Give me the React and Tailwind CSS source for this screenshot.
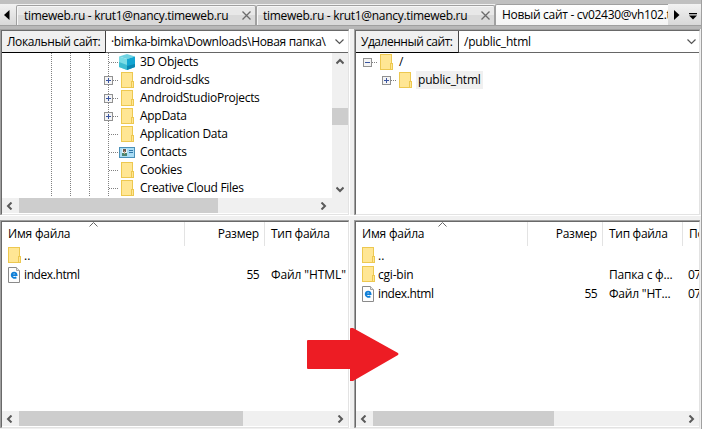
import React from "react";

function Folder() {
  return (
    <svg width="14" height="17" viewBox="0 0 14 17" className="shrink-0" shapeRendering="crispEdges">
      <rect x="0" y="0" width="12" height="16" fill="#edc850" />
      <rect x="1" y="1" width="10" height="14" fill="#ffe694" />
      <rect x="10" y="9" width="3" height="7" fill="#edc850" />
      <rect x="11" y="10" width="1" height="5" fill="#ffe694" />
    </svg>
  );
}

function HtmlFile() {
  return (
    <svg width="12" height="16" viewBox="0 0 12 16" className="shrink-0">
      <path d="M.5.5h8l3 3v12H.5z" fill="#fdfdfd" stroke="#8a8a8a" />
      <path d="M8.5.5v3h3" fill="#e8e8e8" stroke="#a5a5a5" />
      <path d="M3.600 8.200H8.600C8.600 4.700 3.700 4.800 3.700 8.300 3.700 11 6.500 11.300 8.400 10.400" fill="none" stroke="#0f7fd8" strokeWidth="1.800" />
    </svg>
  );
}

function Cube() {
  return (
    <svg width="16" height="16" viewBox="0 0 16 16" className="shrink-0">
      <path d="M8 0l8 2.500L8 5 0 2.500z" fill="#6fd3e2" />
      <path d="M0 2.500L8 5v11l-8-3z" fill="#7bdce6" />
      <path d="M16 2.500L8 5v11l8-3z" fill="#12a5d2" />
      <path d="M0 8L8 11v5l-8-3z" fill="#3dbcd2" />
      <path d="M8 12l8-2v3l-8 3z" fill="#0b87b2" />
    </svg>
  );
}

function Contact() {
  return (
    <svg width="16" height="11" viewBox="0 0 16 11" className="shrink-0" shapeRendering="crispEdges">
      <rect width="16" height="11" fill="#4a90b8" />
      <rect x="1" y="1" width="14" height="9" fill="#a9dcf5" />
      <rect x="3" y="2" width="5" height="7" fill="#e4f1f6" />
      <rect x="4" y="2" width="3" height="3" fill="#6b5a4c" />
      <rect x="3" y="6" width="5" height="3" fill="#4b8570" />
      <rect x="5" y="4" width="1" height="3" fill="#c9a58a" />
      <rect x="10" y="3" width="4" height="1" fill="#2f76a8" />
      <rect x="10" y="5" width="4" height="1" fill="#2f76a8" />
    </svg>
  );
}

function Expander({ open }) {
  return (
    <svg width="9" height="9" viewBox="0 0 9 9" className="shrink-0" shapeRendering="crispEdges">
      <rect width="9" height="9" fill="#919191" />
      <rect x="1" y="1" width="7" height="7" fill="#f4f4f4" />
      <rect x="2" y="4" width="5" height="1" fill="#3a55a0" />
      {!open && <rect x="4" y="2" width="1" height="5" fill="#3a55a0" />}
    </svg>
  );
}

function Chevron({ dir }) {
  const paths = {
    left: "M5.500 .5L2 4l3.500 3.500",
    right: "M2.500 .5L6 4 2.500 7.500",
    up: "M.5 5.500L4 2l3.500 3.500",
    down: "M.5 2.500L4 6l3.500-3.500",
  };
  return (
    <svg width="8" height="8" viewBox="0 0 8 8" className="shrink-0">
      <path d={paths[dir]} fill="none" stroke="#5a5a5a" strokeWidth="2" />
    </svg>
  );
}

function ComboArrow() {
  return (
    <svg width="9" height="6" viewBox="0 0 9 6" className="shrink-0">
      <path d="M.5 .5l4 4 4-4" fill="none" stroke="#555" strokeWidth="1.200" />
    </svg>
  );
}

function Close() {
  return (
    <svg width="9" height="9" viewBox="0 0 9 9" className="shrink-0">
      <path d="M.5.5l8 8M8.500.5l-8 8" stroke="#6b6b6b" strokeWidth="1.300" />
    </svg>
  );
}

function Dots({ vertical, length }) {
  return vertical ? (
    <svg width="1" height={length} className="shrink-0" shapeRendering="crispEdges">
      <path d={`M.5 0V${length}`} stroke="#808080" strokeDasharray="1 1" />
    </svg>
  ) : (
    <svg width={length} height="1" className="shrink-0" shapeRendering="crispEdges">
      <path d={`M0 .5H${length}`} stroke="#808080" strokeDasharray="1 1" />
    </svg>
  );
}

const tree = [
  ["3D Objects", "cube", false],
  ["android-sdks", "folder", true],
  ["AndroidStudioProjects", "folder", true],
  ["AppData", "folder", true],
  ["Application Data", "folder", false],
  ["Contacts", "contact", false],
  ["Cookies", "folder", false],
  ["Creative Cloud Files", "folder", false],
];

function TreeRow({ row }) {
  const [name, icon, expandable] = row;
  return (
    <div className="flex h-[18px] items-center">
      <div className="flex w-[50px] shrink-0 justify-end"><Dots vertical length={18} /></div>
      <div className="flex w-[19px] shrink-0 justify-end"><Dots vertical length={18} /></div>
      <div className="flex w-[19px] shrink-0 justify-end"><Dots vertical length={18} /></div>
      <div className="flex w-[14px] shrink-0" />
      <div className="grid w-[9px] shrink-0 place-items-center">
        <div className="col-start-1 row-start-1 flex"><Dots vertical length={18} /></div>
        {expandable && <div className="col-start-1 row-start-1 flex pt-px"><Expander /></div>}
      </div>
      <div className={expandable ? "flex w-[6px] shrink-0 pt-px" : "-ml-1 flex w-[10px] shrink-0 pt-px"}>
        <Dots length={expandable ? 6 : 10} />
      </div>
      <div className="flex w-[18px] shrink-0 items-center">
        {icon === "cube" && <Cube />}
        {icon === "contact" && <div className="flex pt-px"><Contact /></div>}
        {icon === "folder" && <div className="flex pl-[2px]"><Folder /></div>}
      </div>
      <span className="pl-[3px] tracking-[-0.28px]">{name}</span>
    </div>
  );
}

function HScroll({ thumb, end, className = "" }) {
  return (
    <div className={"flex h-[15px] shrink-0 items-center bg-[#f0f0f0] " + className}>
      <div className="flex w-[17px] shrink-0 pl-1"><Chevron dir="left" /></div>
      <div className={"h-[15px] shrink-0 bg-[#cdcdcd] " + thumb} />
      <div className={"ml-auto flex " + end}><Chevron dir="right" /></div>
    </div>
  );
}

function Frame({ children, className = "" }) {
  return (
    <div className={"flex min-w-0 flex-col border-l border-t border-[#a0a0a0] " + className}>
      <div className="flex min-h-0 flex-1 flex-col border-b border-l border-r border-t border-b-[#e3e3e3] border-l-[#696969] border-r-[#e3e3e3] border-t-[#696969] bg-white">
        {children}
      </div>
    </div>
  );
}

function SortMark({ className }) {
  return (
    <div className={"absolute top-0 " + className}>
      <svg width="9" height="5" viewBox="0 0 9 5"><path d="M.5 4.500l4-4 4 4" fill="none" stroke="#666" /></svg>
    </div>
  );
}

function Tab({ children, pad }) {
  return (
    <div className={"flex h-[20px] items-center justify-between rounded-t-[2px] border border-b-0 border-[#a0a0a0] bg-gradient-to-b from-[#e8e8e8] from-45% to-[#d9d9d9] to-45% pr-[4px] shadow-[inset_1px_1px_0_#f6f6f6] " + pad}>
      <span className="tracking-[-0.3px]">{children}</span>
      <Close />
    </div>
  );
}

export default function App() {
  return (
    <div className="relative flex h-[429px] w-[702px] flex-col overflow-hidden whitespace-pre bg-[#f0f0f0] font-['Open_Sans','Noto_Sans',sans-serif] text-[12px] leading-[16px] text-black">
      <div className="h-[4px] shrink-0 bg-[#c0c0c0]" />
      <div className="flex h-[21px] shrink-0 items-end bg-gradient-to-b from-[#f2f2f2] to-[#d8d8d8]">
        <div className="flex h-[20px] w-[16px] shrink-0 items-center pl-1">
          <svg width="6" height="10" viewBox="0 0 6 10"><path d="M5.500 0v10L0 5z" /></svg>
        </div>
        <div className="w-[240px] shrink-0"><Tab pad="pl-[7px]">timeweb.ru - krut1@nancy.timeweb.ru</Tab></div>
        <div className="w-[239px] shrink-0"><Tab pad="pl-[6px]">timeweb.ru - krut1@nancy.timeweb.ru</Tab></div>
        <div className="flex h-[21px] w-[173px] shrink-0 items-center overflow-hidden rounded-tl-[2px] border-l border-t border-[#a0a0a0] bg-gradient-to-b from-white to-[#f4f4f4] pl-[6px]">
          <span className="tracking-[-0.3px]">Новый сайт - cv02430@vh102.timeweb.ru</span>
        </div>
        <div className="flex h-[20px] flex-1 items-center pl-[6px]">
          <svg width="6" height="10" viewBox="0 0 6 10"><path d="M0 0v10l5.500-5z" /></svg>
          <svg width="8" height="7" viewBox="0 0 8 7" className="ml-[9px] mt-[2px]"><path d="M0 0h8v1.300H0zM0 2.500h8L4 6.500z" /></svg>
        </div>
      </div>
      <div className="h-[4px] shrink-0 border-t border-[#a0a0a0] bg-[#b8b8b8]" />

      <div className="flex h-[186px] shrink-0">
        <Frame className="w-[349px]">
          <div className="flex h-[22px] shrink-0 items-stretch">
            <div className="flex w-[104px] shrink-0 items-center border-b border-r border-b-black border-r-[#444] bg-[#f0f0f0] pl-[5px]">
              <span className="tracking-[-0.37px]">Локальный сайт:</span>
            </div>
            <div className="flex flex-1 items-center justify-between border-b border-[#666] pl-[5px] pr-[4px]">
              <span className="tracking-[-0.31px]">·bimka-bimka\Downloads\Новая папка\</span>
              <ComboArrow />
            </div>
          </div>
          <div className="flex h-[145px] shrink-0">
            <div className="w-[330px] shrink-0 overflow-hidden">
              {tree.map((row) => <TreeRow key={row[0]} row={row} />)}
            </div>
            <div className="flex flex-1 flex-col items-center bg-[#f0f0f0]">
              <div className="flex h-[55px] items-start pt-[5px]"><Chevron dir="up" /></div>
              <div className="h-[17px] w-full bg-[#cdcdcd]" />
              <div className="mt-auto flex pb-[5px]"><Chevron dir="down" /></div>
            </div>
          </div>
          <HScroll thumb="w-[199px]" end="pr-[21px]" />
        </Frame>
        <div className="w-[5px] shrink-0 border-l border-white bg-[#f0f0f0]" />
        <Frame className="w-[346px]">
          <div className="flex h-[22px] shrink-0 items-stretch">
            <div className="flex w-[103px] shrink-0 items-center border-b border-r border-b-black border-r-[#444] bg-[#f0f0f0] pl-[5px]">
              <span className="tracking-[-0.47px]">Удаленный сайт:</span>
            </div>
            <div className="flex flex-1 items-center justify-between border-b border-[#666] pl-[5px] pr-[3px]">
              <span className="tracking-[-0.2px]">/public_html</span>
              <ComboArrow />
            </div>
          </div>
          <div className="flex h-[18px] items-center pl-[7px]">
            <div className="flex pt-px"><Expander open /></div>
            <div className="flex w-[8px]"><Dots length={6} /></div>
            <Folder />
            <span className="pl-[5px]">/</span>
          </div>
          <div className="flex h-[18px] items-center pl-[26px]">
            <div className="flex pt-px"><Expander /></div>
            <div className="flex w-[8px]"><Dots length={6} /></div>
            <Folder />
            <div className="ml-[3px] flex h-[18px] w-[67px] items-center bg-[#f0f0f0] pl-[2px]">
              <span className="tracking-[-0.2px]">public_html</span>
            </div>
          </div>
        </Frame>
      </div>
      <div className="h-[5px] shrink-0 border-t border-white" />

      <div className="flex h-[208px] shrink-0">
        <Frame className="w-[349px]">
          <div className="relative flex h-[24px] shrink-0 items-center">
            <SortMark className="left-[87px]" />
            <div className="flex h-full w-[183px] items-center border-r border-[#e3e3e3] pl-[6px] tracking-[-0.2px]">Имя файла</div>
            <div className="flex h-full w-[80px] items-center justify-end border-r border-[#e3e3e3] pr-[5px] tracking-[-0.2px]">Размер</div>
            <div className="pl-[6px] tracking-[-0.3px]">Тип файла</div>
          </div>
          <div className="flex h-[19px] items-center pl-[6px]"><Folder /><span className="pl-[2px]">..</span></div>
          <div className="flex h-[19px] items-center pl-[6px]">
            <HtmlFile />
            <span className="w-[166px] pl-[4px] tracking-[-0.4px]">index.html</span>
            <span className="w-[73px] text-right tracking-[-0.6px]">55</span>
            <span className="pl-[12px] tracking-[-0.1px]">Файл "HTML"</span>
          </div>
          <HScroll thumb="w-[224px]" end="pr-[4px]" className="mt-auto mb-px" />
        </Frame>
        <div className="w-[5px] shrink-0 border-l border-white bg-[#f0f0f0]" />
        <Frame className="w-[346px]">
          <div className="relative flex h-[24px] shrink-0 items-center overflow-hidden">
            <SortMark className="left-[82px]" />
            <div className="flex h-full w-[172px] shrink-0 items-center border-r border-[#e3e3e3] pl-[6px] tracking-[-0.2px]">Имя файла</div>
            <div className="flex h-full w-[75px] shrink-0 items-center justify-end border-r border-[#e3e3e3] pr-[5px] tracking-[-0.2px]">Размер</div>
            <div className="flex h-full w-[80px] shrink-0 items-center border-r border-[#e3e3e3] pl-[6px] tracking-[-0.3px]">Тип файла</div>
            <div className="pl-[6px] tracking-[-0.2px]">Последнее</div>
          </div>
          <div className="flex h-[19px] items-center pl-[6px]"><Folder /><span className="pl-[2px]">..</span></div>
          <div className="flex h-[19px] items-center overflow-hidden pl-[6px]">
            <Folder />
            <span className="w-[233px] shrink-0 pl-[2px] tracking-[-0.2px]">cgi-bin</span>
            <span className="w-[79px] shrink-0 tracking-[-0.2px]">Папка с ф...</span>
            <span className="tracking-[-0.6px]">07.12.2018</span>
          </div>
          <div className="flex h-[19px] items-center overflow-hidden pl-[6px]">
            <HtmlFile />
            <span className="w-[166px] shrink-0 pl-[4px] tracking-[-0.4px]">index.html</span>
            <span className="w-[57px] shrink-0 text-right tracking-[-0.6px]">55</span>
            <span className="w-[91px] shrink-0 pl-[12px] tracking-[-0.2px]">Файл "HT...</span>
            <span className="tracking-[-0.6px]">07.12.2018</span>
          </div>
          <HScroll thumb="w-[181px]" end="pr-[4px]" className="mt-auto mb-px" />
        </Frame>
      </div>

      <div className="absolute right-0 top-0 h-[429px] w-px bg-[#a0a0a0]" />
      <svg className="absolute left-[307px] top-[327px]" width="92" height="55" viewBox="0 0 92 55">
        <path d="M1 13h42V2q0-1 1-1h2l45 25q1 1 0 2L46 54h-3V42H1q-1 0-1-1V14q0-1 1-1z" fill="#ed1c24" />
      </svg>
    </div>
  );
}
